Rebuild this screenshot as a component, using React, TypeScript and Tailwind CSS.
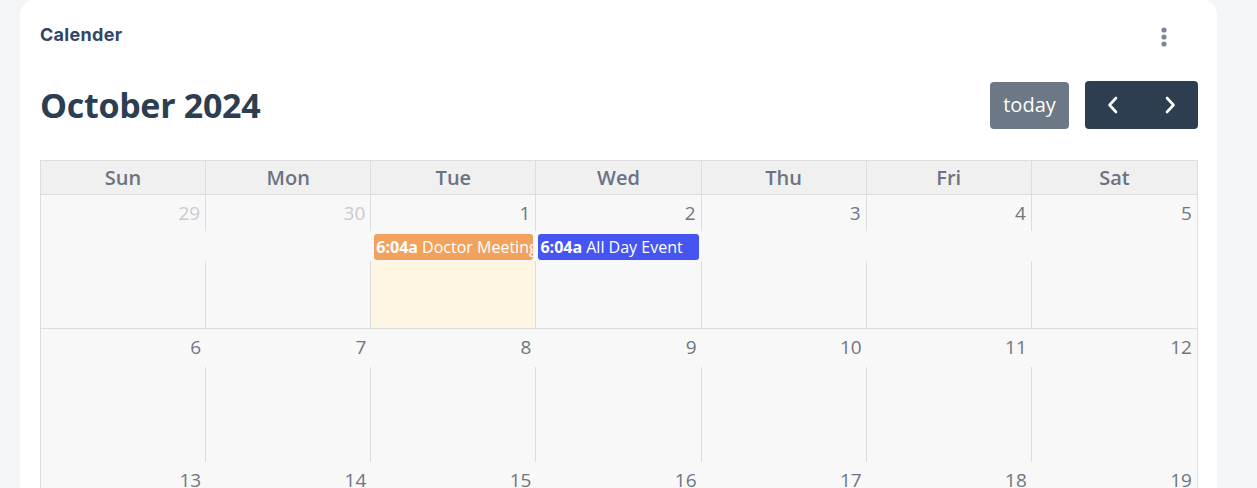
const DAYS = ['Sun', 'Mon', 'Tue', 'Wed', 'Thu', 'Fri', 'Sat'];

const WEEK1 = [
  { n: 29, other: true },
  { n: 30, other: true },
  { n: 1, today: true },
  { n: 2 },
  { n: 3 },
  { n: 4 },
  { n: 5 },
];

const WEEK2 = [6, 7, 8, 9, 10, 11, 12];
const WEEK3 = [13, 14, 15, 16, 17, 18, 19];

const font = { fontFamily: '"Open Sans", "Noto Sans", sans-serif' };

export default function App() {
  return (
    <div className="min-h-screen bg-[#f4f5f7] pl-5 pr-10 overflow-hidden">
      <div className="bg-white rounded-t-2xl -mt-px pt-[26px] px-5 pb-6 h-[500px]">
        <div className="flex items-start justify-between">
          <h2
            className="text-[18px] font-bold text-[#344563] leading-5 tracking-[0.3px]"
            style={{ fontFamily: 'Inter, "Liberation Sans", sans-serif' }}
          >
            Calender
          </h2>
          <button className="mr-[30px] mt-[2px] text-[#7a8699]">
            <svg width="6" height="20" viewBox="0 0 6 20" fill="currentColor">
              <circle cx="3" cy="3" r="2.6" />
              <circle cx="3" cy="10" r="2.6" />
              <circle cx="3" cy="17" r="2.6" />
            </svg>
          </button>
        </div>

        <div className="flex items-center justify-between mt-[34px] h-12" style={font}>
          <h1 className="text-[34px] font-bold text-[#2c3e50] tracking-[-0.3px] leading-none">October 2024</h1>
          <div className="flex items-center gap-4 -mr-px">
            <button className="h-[47px] w-[79px] rounded bg-[#6c7886] text-white text-[20px]">today</button>
            <div className="flex h-12 w-[113px] rounded bg-[#2c3e50] text-white">
              <button className="flex-1 flex items-center justify-center">
                <svg width="14" height="20" viewBox="0 0 14 20" fill="none" stroke="white" strokeWidth="2.6" strokeLinecap="round" strokeLinejoin="round">
                  <path d="M10 3 L3.5 10 L10 17" />
                </svg>
              </button>
              <button className="flex-1 flex items-center justify-center">
                <svg width="14" height="20" viewBox="0 0 14 20" fill="none" stroke="white" strokeWidth="2.6" strokeLinecap="round" strokeLinejoin="round">
                  <path d="M4 3 L10.5 10 L4 17" />
                </svg>
              </button>
            </div>
          </div>
        </div>

        <div className="mt-[31px] border-l border-t border-r border-[#dddddd] w-[1158px]" style={font}>
          <div className="grid grid-cols-7 h-[34px] bg-[#f0f0f0] border-b border-[#dddddd]">
            {DAYS.map((d, i) => (
              <div
                key={d}
                className={`flex items-center justify-center text-[20px] font-semibold text-[#6b7385] ${i < 6 ? 'border-r border-[#dddddd]' : ''}`}
              >
                {d}
              </div>
            ))}
          </div>

          {/* week 1 */}
          <div className="grid grid-cols-7 bg-[#f8f8f8] border-b border-[#dddddd]">
            {WEEK1.map((c, i) => (
              <div key={c.n} className="flex flex-col">
                <div
                  className={`h-9 flex items-start justify-end pr-[5px] pt-[4px] text-[19px] ${c.other ? 'text-[#c9cbcf]' : 'text-[#6f7681]'} ${i < 6 ? 'border-r border-[#dddddd]' : ''}`}
                >
                  {c.n}
                </div>
                <div className="h-[30px] px-[3px] pt-[3px]">
                  {c.n === 1 && (
                    <div className="h-[26px] rounded-[3px] bg-[#f2a25c] text-white text-[16px] leading-[26px] pl-[2px] whitespace-nowrap overflow-hidden">
                      <b>6:04a</b> Doctor Meeting
                    </div>
                  )}
                  {c.n === 2 && (
                    <div className="h-[26px] rounded-[3px] bg-[#4655f2] text-white text-[16px] leading-[26px] pl-[2px] whitespace-nowrap overflow-hidden -ml-px">
                      <b>6:04a</b> All Day Event
                    </div>
                  )}
                </div>
                <div
                  className={`h-[67px] ${c.today ? 'bg-[#fcf6e3]' : ''} ${i < 6 ? 'border-r border-[#dddddd]' : ''}`}
                />
              </div>
            ))}
          </div>

          {/* week 2 */}
          <div className="grid grid-cols-7 bg-[#f8f8f8]">
            {WEEK2.map((n, i) => (
              <div key={n} className="flex flex-col">
                <div className="h-[38px] flex items-start justify-end pr-[5px] pt-[4px] text-[19px] text-[#6f7681]">{n}</div>
                <div className={`h-[95px] ${i < 6 ? 'border-r border-[#dddddd]' : ''}`} />
              </div>
            ))}
          </div>

          {/* week 3 */}
          <div className="grid grid-cols-7 bg-[#f8f8f8]">
            {WEEK3.map(n => (
              <div key={n} className="h-[60px] flex items-start justify-end pr-[5px] pt-[4px] text-[19px] text-[#6f7681]">
                {n}
              </div>
            ))}
          </div>
        </div>
      </div>
    </div>
  );
}
